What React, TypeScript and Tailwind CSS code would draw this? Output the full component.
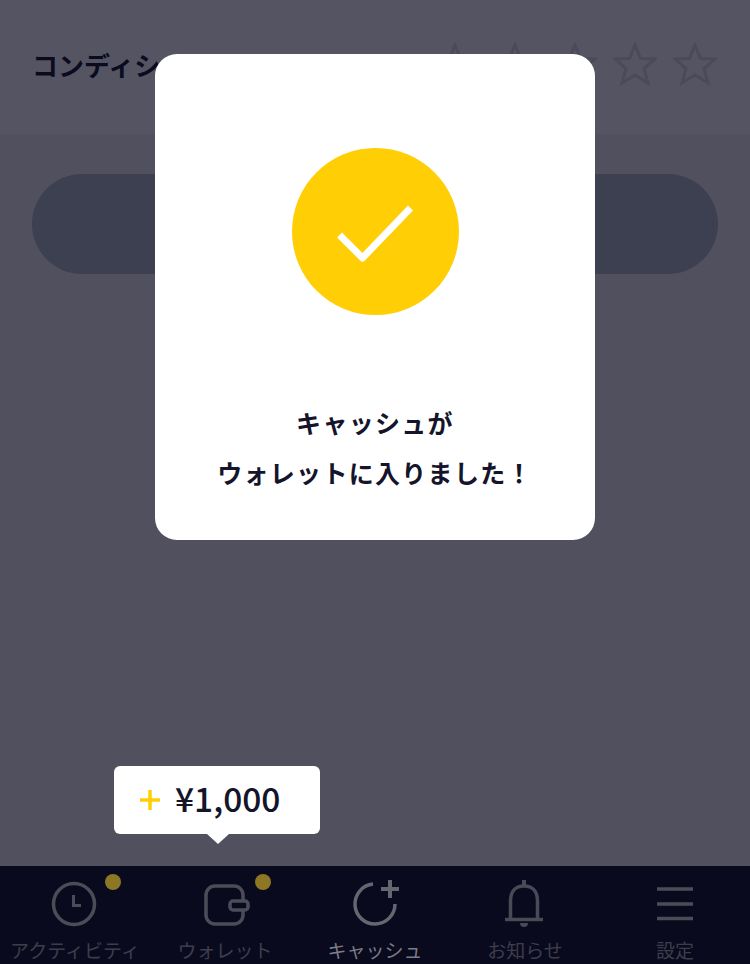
import React from 'react';

const font = { fontFamily: '"Noto Sans CJK JP", "Noto Sans", sans-serif' };

const Star = () => (
  <svg width="44" height="44" viewBox="0 0 44 44" fill="none" stroke="#dcdce0" strokeWidth="3">
    <path d="M22 3 L27.5 16.5 L42 17 L31 26.5 L35 41 L22 33 L9 41 L13 26.5 L2 17 L16.5 16.5 Z" />
  </svg>
);

const ClockIcon = () => (
  <svg width="60" height="50" viewBox="0 0 60 50" fill="none" stroke="#4c4c58" strokeWidth="3.5">
    <circle cx="29" cy="24" r="20.5" />
    <path d="M28.5 15 V25.5 H36" strokeWidth="3" />
  </svg>
);

const WalletIcon = () => (
  <svg width="60" height="50" viewBox="0 0 60 50" fill="none" stroke="#4c4c58" strokeWidth="3.5">
    <rect x="11" y="6" width="37" height="38" rx="9" />
    <rect x="35" y="21" width="18" height="9" rx="3" fill="#0a0a1e" />
  </svg>
);

const CashIcon = () => (
  <svg width="60" height="50" viewBox="0 0 60 50" fill="none" stroke="#666670">
    <path d="M28 4.1 A20 20 0 1 0 50 24" strokeWidth="3.5" />
    <path d="M45 0 V18 M36 9 H54" strokeWidth="4" />
  </svg>
);

const BellIcon = () => (
  <svg width="60" height="50" viewBox="0 0 60 50" fill="none" stroke="#4a4a56" strokeWidth="3.5">
    <path d="M15.5 39 V21 C15.5 11 21 6 29 6 C37 6 42.5 11 42.5 21 V39" />
    <path d="M10 39.5 H48" />
    <path d="M29 0 V6" strokeWidth="4" />
    <path d="M25 43 H33 A4 4 0 0 1 25 43 Z" fill="#4a4a56" stroke="none" />
  </svg>
);

const MenuIcon = () => (
  <svg width="60" height="50" viewBox="0 0 60 50" fill="none" stroke="#4c4c58" strokeWidth="3.5">
    <path d="M12 9 H48 M12 24 H48 M12 38.5 H48" />
  </svg>
);

const tabs = [
  { label: 'アクティビティ', icon: <ClockIcon />, dot: true, active: false },
  { label: 'ウォレット', icon: <WalletIcon />, dot: true, active: false },
  { label: 'キャッシュ', icon: <CashIcon />, dot: false, active: true },
  { label: 'お知らせ', icon: <BellIcon />, dot: false, active: false },
  { label: '設定', icon: <MenuIcon />, dot: false, active: false },
];

export default function App() {
  return (
    <div className="relative w-[750px] h-[964px] overflow-hidden flex flex-col bg-[#f2f2f4]" style={font}>
      {/* page under the dialog */}
      <div className="h-[134px] bg-white flex items-center justify-between pl-[32px] pr-[33px] pb-[6px]">
        <span className="text-[26px] font-bold text-[#0b0b1f]">コンディション</span>
        <div className="flex gap-[16px]">
          <Star />
          <Star />
          <Star />
          <Star />
          <Star />
        </div>
      </div>
      <div className="flex-1 px-[32px] pt-[40px]">
        <div className="h-[100px] rounded-full bg-[#b2bcc6]" />
      </div>
      <nav className="h-[98px] bg-[#0a0a1e] flex">
        {tabs.map((tab) => (
          <div key={tab.label} className="relative w-[150px] flex flex-col items-center pt-[14px]">
            {tab.icon}
            <span className={`mt-[7px] text-[19px] leading-[26px] whitespace-nowrap ${tab.active ? 'text-[#7c7c86]' : 'text-[#3e3e4a]'}`}>
              {tab.label}
            </span>
            {tab.dot && <span className="absolute top-[8px] left-[105px] w-[16px] h-[16px] rounded-full bg-[#8c7725]" />}
          </div>
        ))}
      </nav>

      {/* dim layer, the tab bar is drawn with its dimmed colours */}
      <div className="absolute inset-x-0 top-0 bottom-[98px] bg-[#0b0b1f]/70" />

      {/* dialog */}
      <div className="absolute left-[155px] top-[54px] w-[440px] h-[486px] bg-white rounded-[22px] flex flex-col items-center pt-[94px]">
        <div className="w-[167px] h-[167px] rounded-full bg-[#ffce05]">
          <svg width="167" height="167" viewBox="0 0 167 167" fill="none" stroke="#fff" strokeWidth="7">
            <path d="M47.5 87 L70.5 110 L118.5 60" strokeLinejoin="round" />
          </svg>
        </div>
        <p className="mt-[82px] text-[25px] leading-[50px] font-bold text-center text-[#14142a] tracking-[1.3px]">
          キャッシュが
          <br />
          ウォレットに入りました！
        </p>
      </div>

      {/* earned amount bubble */}
      <div className="absolute left-[114px] top-[766px] w-[206px] h-[68px] bg-white rounded-[6px] flex items-center pl-[26px]">
        <svg width="20" height="20" viewBox="0 0 20 20" stroke="#ffce05" strokeWidth="3.5">
          <path d="M10 0 V20 M0 10 H20" />
        </svg>
        <span className="ml-[15px] mb-[5px] text-[33.5px] leading-[44px] font-medium text-[#14142a]">¥1,000</span>
        <span className="absolute left-[93px] top-[68px] w-0 h-0 border-x-[11px] border-x-transparent border-t-[10px] border-t-white" />
      </div>
    </div>
  );
}
